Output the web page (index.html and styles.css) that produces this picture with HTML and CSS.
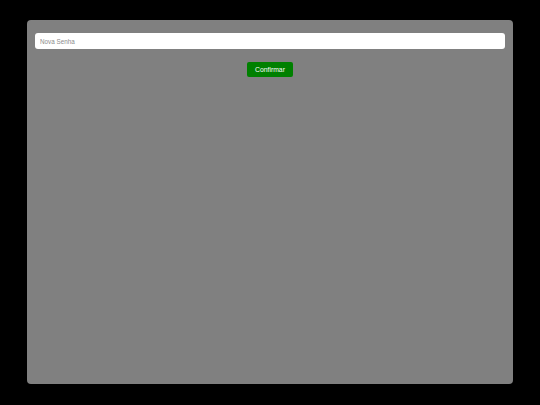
FILE: index.html
```html
<!DOCTYPE html>
<html lang="pt">
<head>
<meta charset="utf-8">
<link rel="stylesheet" href="styles.css">
</head>
<body>
<div class="panel">
  <input class="field" type="password" placeholder="Nova Senha">
  <div class="actions">
    <button class="btn" type="button">Confirmar</button>
  </div>
</div>
</body>
</html>
```
FILE: styles.css
```css
html, body {
  margin: 0;
  padding: 0;
  background: #000;
  height: 100%;
}
body {
  padding: 20px 27px 21px;
  box-sizing: border-box;
  font-family: "Liberation Sans", Arial, sans-serif;
}
.panel {
  background: #808080;
  border-radius: 4px;
  height: 364px;
  padding: 13px 8px 0;
  box-sizing: border-box;
  display: flex;
  flex-direction: column;
}
.field {
  display: block;
  width: 100%;
  height: 16px;
  box-sizing: border-box;
  border: none;
  border-radius: 3px;
  background: #fff;
  padding: 0 5px;
  font-family: "Liberation Sans", Arial, sans-serif;
  font-size: 6.3px;
  outline: none;
}
.field::placeholder {
  color: #8c8c8c;
}
.actions {
  display: flex;
  justify-content: center;
  margin-top: 13px;
}
.btn {
  width: 46px;
  height: 15px;
  padding: 0;
  border: none;
  border-radius: 2px;
  background: #008000;
  color: #fff;
  font-family: "Liberation Sans", Arial, sans-serif;
  font-size: 6.8px;
}
```
